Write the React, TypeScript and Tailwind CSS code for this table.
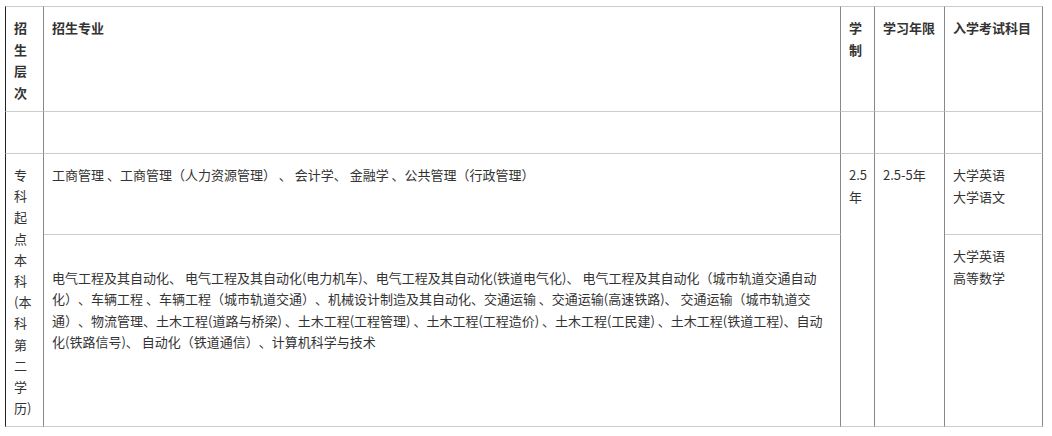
const majorsA =
  "工商管理 、工商管理（人力资源管理） 、 会计学、 金融学 、公共管理（行政管理）"

// lines broken where the reference breaks them
const majorsB = [
  "电气工程及其自动化、 电气工程及其自动化(电力机车)、电气工程及其自动化(铁道电气化)、 电气工程及其自动化（城市轨道交通自动",
  "化）、车辆工程 、车辆工程（城市轨道交通）、机械设计制造及其自动化、交通运输 、交通运输(高速铁路)、 交通运输（城市轨道交",
  "通）、物流管理、土木工程(道路与桥梁) 、土木工程(工程管理) 、土木工程(工程造价) 、土木工程(工民建) 、土木工程(铁道工程)、自动",
  "化(铁路信号)、 自动化（铁道通信）、计算机科学与技术",
]

// cell borders: light gray horizontals, mid gray verticals, dark outer sides
const cell = "align-top px-2 pt-[10px] border-b border-r border-b-[#cccccc] border-r-[#888888]"
const first = "border-l border-l-[#222222]"
const last = "border-r-[#222222]"

export default function App() {
  return (
    <div
      className="w-[1052px] h-[436px] bg-white pt-[6px] pl-[5px] text-[13px] leading-[21.5px] text-[#333333] [text-spacing-trim:space-all]"
      style={{ fontFamily: '"Noto Sans CJK SC", "Noto Sans", sans-serif' }}
    >
      <table className="table-fixed border-separate border-spacing-0 w-[1038px]">
        <colgroup>
          <col className="w-[39px]" />
          <col className="w-[797px]" />
          <col className="w-[34px]" />
          <col className="w-[70px]" />
          <col className="w-[98px]" />
        </colgroup>
        <tbody>
          {/* header */}
          <tr className="h-[106px] font-bold">
            <td className={`${cell} ${first} border-t border-t-[#cccccc]`}>招生层次</td>
            <td className={`${cell} border-t border-t-[#cccccc]`}>招生专业</td>
            <td className={`${cell} border-t border-t-[#cccccc]`}>学制</td>
            <td className={`${cell} border-t border-t-[#cccccc]`}>学习年限</td>
            <td className={`${cell} ${last} border-t border-t-[#cccccc]`}>入学考试科目</td>
          </tr>

          {/* empty spacer row */}
          <tr className="h-[42px]">
            <td className={`${cell} ${first}`}></td>
            <td className={cell}></td>
            <td className={cell}></td>
            <td className={cell}></td>
            <td className={`${cell} ${last}`}></td>
          </tr>

          <tr className="h-[81px]">
            <td rowSpan={2} className={`${cell} ${first} leading-[21.2px] break-all`}>
              专科起点本科(本科第二学历)
            </td>
            <td className={cell}>{majorsA}</td>
            <td rowSpan={2} className={cell}>2.5年</td>
            <td rowSpan={2} className={cell}>2.5-5年</td>
            <td className={`${cell} ${last}`}>
              大学英语
              <br />
              大学语文
            </td>
          </tr>
          <tr className="h-[192px]">
            <td className={cell}>
              <br />
              {majorsB.map((line, i) => (
                <div key={i} className="whitespace-nowrap">
                  {line}
                </div>
              ))}
            </td>
            <td className={`${cell} ${last}`}>
              大学英语
              <br />
              高等数学
            </td>
          </tr>
        </tbody>
      </table>
    </div>
  )
}
